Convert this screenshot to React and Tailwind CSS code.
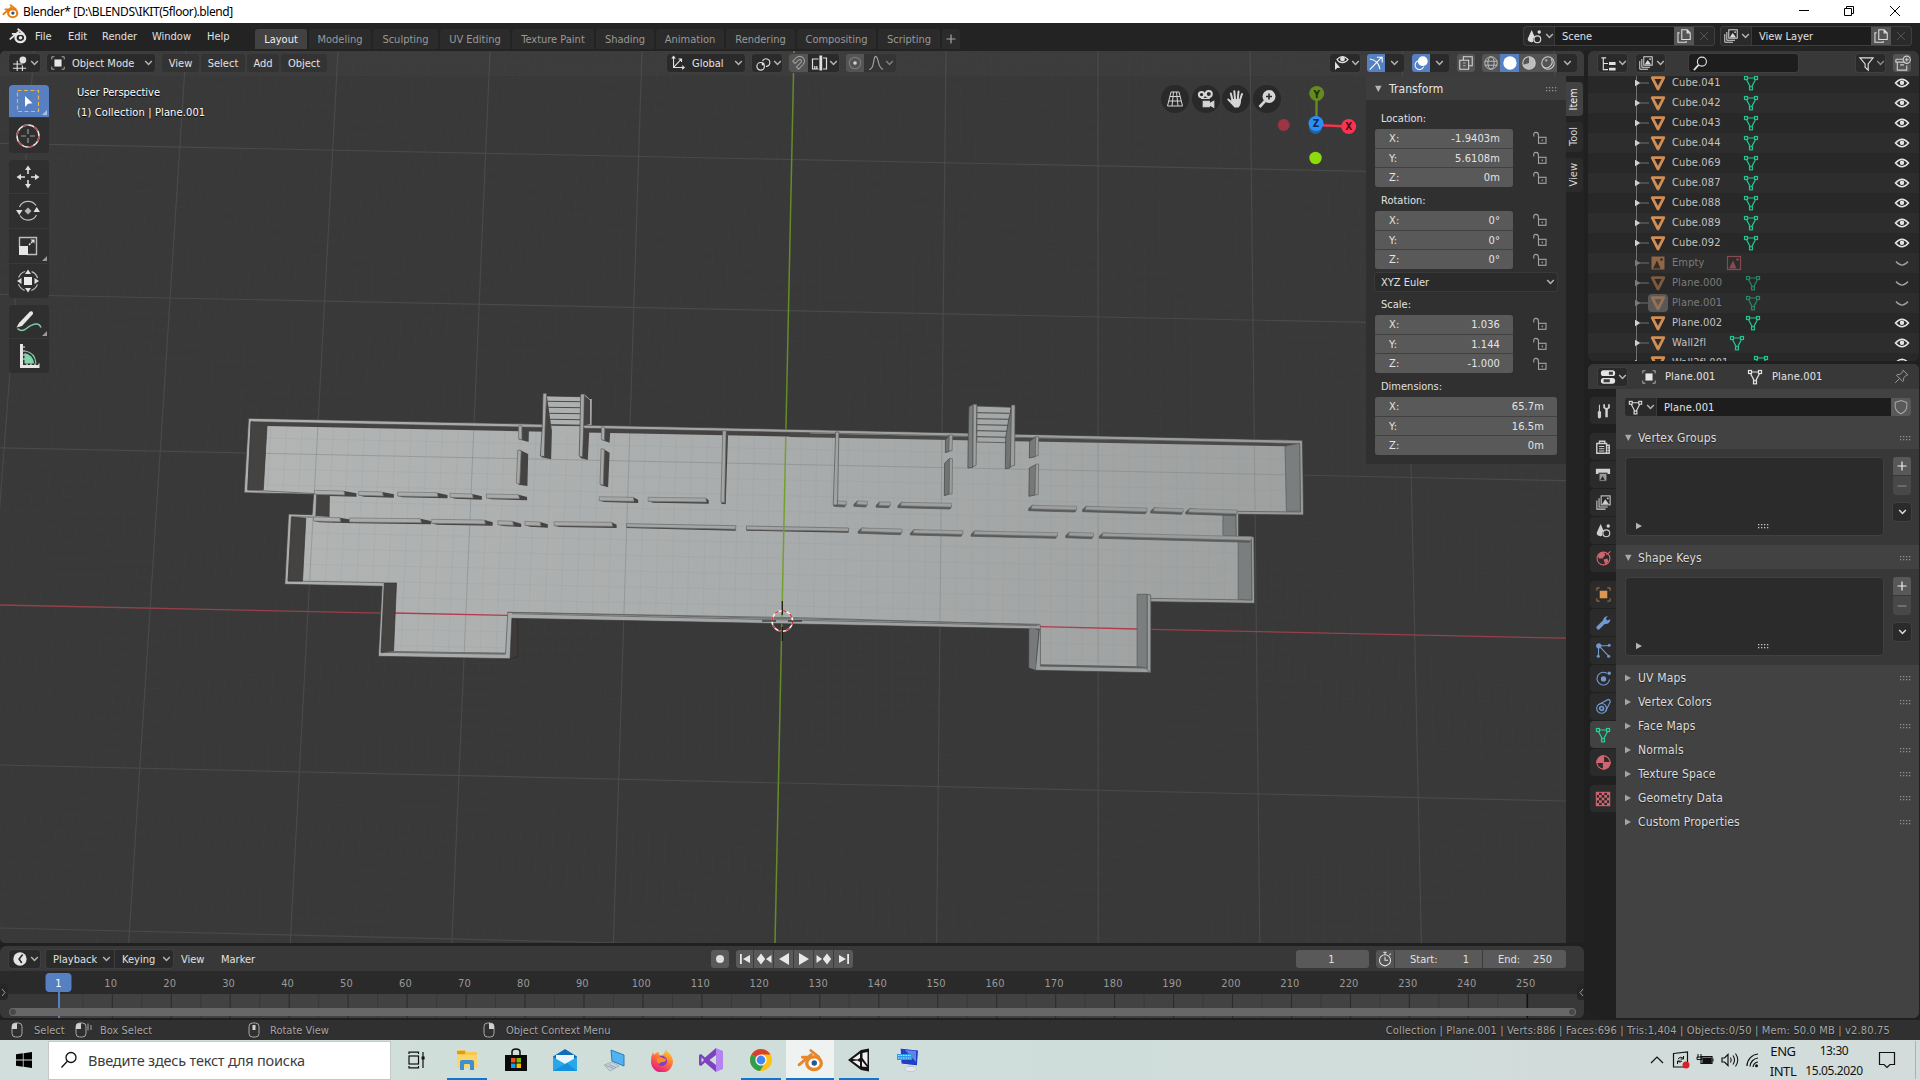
import React from "react";

/* ---------- shared bits ---------- */
const Ic = ({ s = 18, c = "#e0e0e0", children, className = "", w = 1.2, vb = "0 0 18 18" }) => (
  <svg width={s} height={s} viewBox={vb} fill="none" stroke={c} strokeWidth={w} className={"shrink-0 " + className}>
    {children}
  </svg>
);
const Chev = ({ c = "#b5b5b5", className = "" }) => (
  <svg width="9" height="6" viewBox="0 0 9 6" fill="none" stroke={c} strokeWidth="1.5" className={"shrink-0 " + className}>
    <path d="M1.2 1l3.3 3.4L7.8 1" />
  </svg>
);
const Gap = ({ className }) => <div className={"shrink-0 " + className} />;
const box = "h-[18px] shrink-0 flex items-center rounded-[3px] ";
const dark = "bg-[#2a2a2a] shadow-[0_0_0_1px_#3f3f3f] ";

/* ---------- icons ---------- */
const BlenderMark = ({ s = 18, c = "#e6e6e6", dot, hole = "none" }) => (
  <svg width={s} height={s} viewBox="0 0 20 20" fill="none" className="shrink-0">
    <path d="M10.2 2.6l6 4.8M1.5 13.2l9-7.6M4 7.6h9" stroke={c} strokeWidth="2.1" strokeLinecap="round" />
    <ellipse cx="12.6" cy="12" rx="5.4" ry="4.7" stroke={c} strokeWidth="2.5" fill={hole} />
    <circle cx="12.8" cy="11.9" r="2" fill={dot || c} />
  </svg>
);
const MeshIc = ({ s = 18, c = "#21c592", className = "", o = 1 }) => (
  <svg width={s} height={s} viewBox="0 0 18 18" fill="none" stroke={c} strokeWidth="1.2" opacity={o} className={"shrink-0 " + className}>
    <rect x="2.5" y="2.5" width="3" height="3" />
    <rect x="12.5" y="2.5" width="3" height="3" />
    <rect x="7.5" y="12.8" width="3" height="3" />
    <path d="M5.5 4h7M4.600 5.800l3.600 6.800M13.400 5.800l-3.600 6.800" />
  </svg>
);
const MeshObj = ({ o = 1 }) => (
  <svg width="16" height="16" viewBox="0 0 16 16" opacity={o} className="shrink-0 relative">
    <path d="M2.200 2.700h11.600L8 14z" fill="none" stroke="#d28d55" strokeWidth="2.800" strokeLinejoin="round" />
  </svg>
);
const ObjSq = ({ c = "#e6e6e6", s = 16 }) => (
  <Ic s={s} c={c} w={1}>
    <rect x="5" y="5" width="8" height="8" fill={c} stroke="none" />
    <path d="M2 5V2h3M13 2h3v3M16 13v3h-3M5 16H2v-3" opacity="0.75" />
  </Ic>
);
const Images = ({ c = "#dcdcdc", s = 18 }) => (
  <Ic s={s} c={c} w={1.1}>
    <rect x="6.5" y="2" width="9.5" height="9.5" />
    <path d="M4.3 4.5v9.3h9.2M2 6.8v9.2h9.2" />
    <path d="M7.5 10.800l3.400-5.300 3.800 5.300z" fill={c} stroke="none" />
    <circle cx="13.6" cy="4.6" r="1" fill={c} stroke="none" />
  </Ic>
);
const SceneIc = ({ c = "#dcdcdc", s = 18 }) => (
  <Ic s={s} c={c}>
    <path d="M6 2L1.800 11.500q0 3.500 4 3.500 1.600 0 2-1A5 5 0 0 1 9 9z" fill={c} stroke="none" />
    <circle cx="12" cy="12" r="3.6" />
    <circle cx="14" cy="4.2" r="1.8" fill={c} stroke="none" />
  </Ic>
);
const Copy = () => (
  <Ic s={16} c="#dedede">
    <path d="M6.5 2h6l3.500 3.500V13H6.500zM12.500 2v3.500H16M4 5.500H2.200V16h9.300v-1.500" />
  </Ic>
);
const Eye = () => (
  <svg width="16" height="12" viewBox="0 0 16 12" fill="none">
    <path d="M1.500 6Q8-1.600 14.500 6 8 13.600 1.500 6z" stroke="#e4e4e4" strokeWidth="1.600" />
    <circle cx="8" cy="5.800" r="2.200" fill="#e4e4e4" />
  </svg>
);
const EyeShut = () => (
  <svg width="16" height="12" viewBox="0 0 16 12" fill="none">
    <path d="M2 4.500Q8 11.600 14 4.500" stroke="#a0a0a0" strokeWidth="1.300" />
  </svg>
);
const Lock = () => (
  <svg width="16" height="14" viewBox="0 0 16 14" fill="none" stroke="#a5a5a5" strokeWidth="1.100" className="-ml-px">
    <rect x="6.500" y="6.300" width="7.500" height="6" />
    <path d="M1.800 5.500V3.600q0-2.200 2.200-2.200t2.400 2.200v2.700M10.300 8.400v1.800" />
  </svg>
);
const Grip = ({ c = "#8f8f8f" }) => (
  <svg width="12" height="5" viewBox="0 0 12 5" fill={c} className="shrink-0">
    {[0, 3, 6, 9].map((x) => (
      <g key={x}>
        <rect x={x} y="0" width="1.300" height="1.300" />
        <rect x={x} y="3" width="1.300" height="1.300" />
      </g>
    ))}
  </svg>
);
const TriR = ({ c = "#a5a5a5" }) => (
  <svg width="7" height="8" viewBox="0 0 7 8" className="shrink-0"><path d="M0 .8l6 3.200-6 3.200z" fill={c} /></svg>
);
const TriD = ({ c = "#b5b5b5" }) => (
  <svg width="7" height="8" viewBox="0 0 7 8" className="shrink-0"><path d="M0 .8h6.600L3.300 7z" fill={c} /></svg>
);

/* ---------- title + top bar ---------- */
function TitleBar() {
  return (
    <div className="h-[23px] bg-white flex items-center text-black font-['Noto_Sans'] text-[12px] tracking-[-0.42px]">
      <Gap className="w-[2px]" />
      <BlenderMark s={17} c="#e87d0d" dot="#265787" />
      <span className="ml-[4px] whitespace-pre">{"Blender* [D:\\BLENDS\\IKIT(5floor).blend]"}</span>
      <div className="ml-auto flex items-center">
        <svg width="140" height="22" viewBox="0 0 140 22" fill="none" stroke="#000" strokeWidth="1">
          <path d="M19 9.500h10" />
          <path d="M64.500 7.500h7v7h-7zM66.500 7.500v-2h7v7h-2" />
          <path d="M110 5l10 10M120 5l-10 10" />
        </svg>
      </div>
    </div>
  );
}

function IdBlock({ icon, text }) {
  return (
    <div className={box + dark + "overflow-hidden"}>
      <div className="w-[30px] flex items-center gap-[2px] pl-[2px]">{icon}<Chev /></div>
      <div className="w-[120px] h-full bg-[#1d1d1d] border-l border-[#3a3a3a] flex items-center pl-[7px] text-[#e0e0e0]">{text}</div>
      <div className="w-[20px] h-full bg-[#545454] flex items-center justify-center"><Copy /></div>
      <div className="w-[20px] h-full flex items-center justify-center"><Ic s={12} c="#5f5f5f"><path d="M3 3l12 12M15 3L3 15" /></Ic></div>
    </div>
  );
}

const TABS = [
  ["Layout", "w-[52px] mr-[2px]"], ["Modeling", "w-[62px] mr-[2px]"], ["Sculpting", "w-[65px] mr-[2px]"],
  ["UV Editing", "w-[70px] mr-[2px]"], ["Texture Paint", "w-[82px] mr-[2px]"], ["Shading", "w-[58px] mr-[2px]"],
  ["Animation", "w-[68px] mr-[2px]"], ["Rendering", "w-[69px] mr-[2px]"], ["Compositing", "w-[79px] mr-[2px]"], ["Scripting", "w-[62px] mr-[2px]"],
];
function TopBar() {
  return (
    <div className="h-[28px] bg-[#232323] flex items-start">
      <div className="w-[255px] h-[26px] flex items-center text-[#e0e0e0] shrink-0">
        <Gap className="w-[9px]" />
        <BlenderMark s={18} />
        <span className="ml-[8px] w-[33px]">File</span>
        <span className="w-[34px]">Edit</span>
        <span className="w-[50px]">Render</span>
        <span className="w-[55px]">Window</span>
        <span>Help</span>
      </div>
      <div className="flex pt-[6px]">
        {TABS.map(([t, w], i) => (
          <div key={t} className={w + " h-[20px] flex items-center justify-center rounded-t-[3px] shrink-0 " + (i === 0 ? "bg-[#424242] text-[#eeeeee]" : "bg-[#2b2b2b] text-[#999999]")}>
            {t}
          </div>
        ))}
        <div className="w-[18px] h-[20px] bg-[#2b2b2b] rounded-t-[3px] flex items-center justify-center">
          <Ic s={10} c="#a5a5a5" vb="0 0 10 10"><path d="M5 .5v9M.5 5h9" /></Ic>
        </div>
      </div>
      <div className="ml-auto flex pt-[4px] pr-[9px] gap-[7px]">
        <IdBlock icon={<SceneIc s={17} />} text="Scene" />
        <IdBlock icon={<Images s={16} />} text="View Layer" />
      </div>
    </div>
  );
}

/* ---------- 3D scene ---------- */
const f = (n) => n.toFixed(1);
const L = (...p) => p.map(([x, y]) => f(230 + x / 2.703) + "," + f(380 + y / 3)).join(" ");
const R = (...p) => p.map(([x, y]) => f(780 + x / 2.8) + "," + f(380 + y / 3)).join(" ");
const DK = "#454341";
const Poly = ({ p, c = "url(#top)", s = "none" }) => <polygon points={p} fill={c} stroke={s} strokeWidth="0.7" />;

const OUTER =
  L([50, 115], [1568, 149]) + " " +
  R([1463, 181], [1466, 405], [1284, 403], [1284, 469], [1327, 470], [1329, 670], [1039, 665], [1038, 878], [715, 871], [726, 747]) + " " +
  L([1568, 733], [762, 715], [757, 836], [401, 829], [411, 619], [148, 613], [158, 402], [222, 404], [226, 343], [38, 338]);
const FLOOR =
  L([57, 125], [1568, 158]) + " " +
  R([1455, 191], [1457, 396], [1276, 394], [1277, 469], [1320, 480], [1321, 660], [1028, 655], [1028, 864], [729, 858], [729, 735]) + " " +
  L([1568, 714], [751, 697], [745, 820], [408, 816], [417, 608], [157, 603], [166, 410], [232, 412], [234, 341], [48, 330]);

const LSEG = [
  [228, 308, 342, 331], [348, 412, 443, 334], [453, 560, 588, 336], [595, 655, 681, 340], [693, 780, 803, 342],
  [998, 1090, 1103, 350], [1130, 1286, 1294, 352], [226, 297, 333, 411], [323, 515, 543, 414], [545, 688, 710, 418],
  [724, 764, 787, 422], [797, 838, 859, 424], [876, 1032, 1045, 425],
];
const RSEG = [
  [151, 186, 363, 364], [207, 245, 363, 364], [269, 309, 366, 366], [330, 481, 367, 370], [696, 831, 376, 379],
  [847, 1028, 379, 384], [1038, 1129, 383, 386], [1136, 1280, 386, 390], [219, 342, 444, 447], [365, 512, 449, 452],
  [535, 777, 453, 458], [800, 878, 457, 459], [894, 1320, 459, 470],
];

function gridLines(minor) {
  const out = [];
  for (let i = -60; i <= 60; i++) {
    if ((i % 10 === 0) === minor) continue;
    const k = i / 10;
    if (k === 0) continue;
    out.push("M" + f(794 + 152 * k) + " 51L" + f(775 + 161.6 * k) + " 943");
  }
  const ys = [-7, 143.3, 294.5, 447.8, 605, 765, 928, 1094];
  const yr = [24, 175.5, 326.5, 480.7, 638.2, 801, 966, 1134];
  for (let a = 0; a < 7; a++)
    for (let m = 0; m < 10; m++) {
      if ((m === 0) === minor || (a === 4 && m === 0)) continue;
      const l = ys[a] + ((ys[a + 1] - ys[a]) * m) / 10;
      const r = yr[a] + ((yr[a + 1] - yr[a]) * m) / 10;
      out.push("M0 " + f(l) + "L1566 " + f(r));
    }
  return out.join("");
}
const MINOR = gridLines(true);
const MAJOR = gridLines(false);

function Scene() {
  return (
    <svg className="absolute left-0 top-0" width="1566" height="892" viewBox="0 51 1566 892">
      <defs>
        <linearGradient id="floor" gradientUnits="userSpaceOnUse" x1="250" y1="430" x2="1300" y2="600">
          <stop offset="0" stopColor="#b3b5b5" />
          <stop offset="0.5" stopColor="#a9acac" />
          <stop offset="1" stopColor="#9ea0a0" />
        </linearGradient>
        <linearGradient id="top" gradientUnits="userSpaceOnUse" x1="250" y1="0" x2="1300" y2="0">
          <stop offset="0" stopColor="#adafae" />
          <stop offset="1" stopColor="#979a9a" />
        </linearGradient>
        <clipPath id="fl"><polygon points={FLOOR} /></clipPath>
      </defs>
      <rect x="0" y="51" width="1566" height="892" fill="#393939" />
      <path d={MINOR} stroke="#3c3c3c" strokeWidth="1" fill="none" />
      <path d={MAJOR} stroke="#494949" strokeWidth="1.200" fill="none" />
      <path d="M0 605L1566 638.200" stroke="#97404a" strokeWidth="1.300" />
      <path d="M794 51L775 943" stroke="#648b27" strokeWidth="1.500" />

      <Poly p={L([762, 715], [778, 717], [778, 830], [757, 836])} c="#3d3a39" s="#2c2b2a" />
      <Poly p={R([697, 742], [726, 747], [718, 871], [697, 863])} c="#777a7a" s="#444" />
      <Poly p={L([846, 40], [856, 40], [856, 48], [946, 50], [948, 42], [958, 42], [973, 57], [978, 57], [977, 140], [845, 140])} c="url(#floor)" s="#333" />
      <Poly p={OUTER} s="#3c3c3c" />
      <Poly p={R([700, 742], [716, 746], [716, 869], [698, 863])} c="#777a7a" />
      <Poly p={FLOOR} c="url(#floor)" s="#555" />
      <g clipPath="url(#fl)" fill="none">
        <path d={MINOR} stroke="#8d9090" strokeWidth="0.800" opacity="0.200" />
        <path d={MAJOR} stroke="#838686" strokeWidth="1" opacity="0.550" />
        <path d={"M" + L([442, 699]) + "L" + L([750, 706])} stroke="#b03c4c" strokeWidth="1.300" />
        <path d={"M" + R([729, 740]) + "L" + R([1000, 747])} stroke="#b03c4c" strokeWidth="1.300" />
      </g>
      {/* inner faces of the outer walls */}
      <Poly p={L([57, 125], [1568, 158], [1568, 171], [100, 138])} c={DK} />
      <Poly p={R([27, 159], [1455, 191], [1414, 199], [27, 171])} c="#4b4947" />
      <Poly p={L([57, 125], [100, 138], [90, 329], [48, 329])} c={DK} s="#333" />
      <Poly p={L([234, 342], [270, 347], [269, 411], [232, 408])} c={DK} />
      <Poly p={L([167, 411], [205, 415], [196, 603], [157, 603])} c={DK} s="#333" />
      <Poly p={L([418, 609], [450, 609], [442, 816], [409, 818])} c={DK} s="#333" />
      <Poly p={L([442, 813], [745, 818], [745, 824], [410, 818])} c="#6d6f6f" />
      <Poly p={R([1414, 199], [1455, 190], [1457, 394], [1418, 394])} c="#7b7e7e" s="#5a5a5a" />
      <Poly p={R([1240, 402], [1276, 402], [1277, 468], [1240, 466])} c="#7b7e7e" s="#5a5a5a" />
      <Poly p={R([1283, 484], [1320, 480], [1321, 660], [1283, 658])} c="#7b7e7e" s="#5a5a5a" />
      <Poly p={R([1028, 643], [1038, 645], [1038, 878], [1028, 870])} s="#555" />
      <Poly p={R([1000, 643], [1028, 643], [1028, 864], [1000, 859])} c="#7b7e7e" s="#5a5a5a" />
      <Poly p={R([729, 853], [1000, 859], [1028, 865], [729, 859])} c="#5d5f5f" />
      <path d={"M" + L([751, 697]) + "L" + R([726, 733]) + "M" + L([762, 701]) + "L" + R([720, 737])} stroke="#606262" strokeWidth="0.800" />

      {/* corridor partitions */}
      {LSEG.map(([a, b, t, y], i) => (
        <g key={i}>
          <Poly p={L([a, y + 8], [b, y + 2], [t, y + 9], [t, y + 19], [a + 14, y + 16], [a, y + 12])} c={DK} />
          <Poly p={L([a, y], [b, y + 2], [b + 2, y + 14], [a, y + 12])} s="#777" />
        </g>
      ))}
      {RSEG.map(([a, b, y, z], i) => (
        <g key={i}>
          <Poly p={R([a, y + 10], [a + 10, y], [b, z + 8], [b - 5, z + 17], [a, y + 16])} c="#5a5b5a" s="#555" />
          <Poly p={R([a + 10, y], [b, z], [b - 1, z + 11], [a + 8, y + 10])} s="#777" />
        </g>
      ))}
      <Poly p={L([1072, 439], [1367, 444], [1367, 452], [1072, 444])} c={DK} />
      <Poly p={L([1072, 431], [1367, 437], [1367, 448], [1072, 441])} s="#666" />
      <Poly p={L([1396, 446], [1672, 451], [1672, 458], [1396, 452])} c={DK} />
      <Poly p={L([1396, 438], [1672, 444], [1672, 454], [1396, 449])} s="#666" />

      {/* cross walls, left half */}
      <Poly p={L([788, 145], [808, 152], [807, 186], [780, 178])} c={DK} />
      <Poly p={L([780, 137], [789, 137], [789, 180], [780, 176])} s="#666" />
      <Poly p={L([784, 210], [806, 222], [804, 318], [780, 314])} c={DK} />
      <Poly p={L([778, 210], [787, 212], [783, 312], [774, 309])} s="#666" />
      <Poly p={L([1012, 145], [1028, 155], [1026, 188], [1005, 180])} c={DK} />
      <Poly p={L([1004, 140], [1013, 142], [1012, 182], [1004, 178])} s="#666" />
      <Poly p={L([1008, 206], [1026, 218], [1022, 322], [1002, 316])} c={DK} />
      <Poly p={L([1003, 206], [1012, 208], [1009, 316], [1000, 313])} s="#666" />
      <Poly p={L([1338, 152], [1346, 168], [1340, 373], [1328, 371])} c={DK} />
      <Poly p={L([1332, 152], [1341, 152], [1337, 368], [1327, 366])} s="#666" />
      {/* cross walls, right half */}
      <Poly p={R([156, 156], [165, 156], [161, 374], [149, 376])} s="#555" />
      <Poly p={R([463, 180], [474, 165], [474, 214], [463, 218])} c="#727474" s="#444" />
      <Poly p={R([474, 165], [483, 165], [482, 212], [473, 212])} s="#666" />
      <Poly p={R([461, 250], [475, 235], [474, 342], [460, 347])} c="#727474" s="#444" />
      <Poly p={R([475, 235], [483, 236], [482, 342], [474, 342])} s="#666" />
      <Poly p={R([699, 184], [716, 170], [715, 230], [698, 234])} c="#777979" s="#444" />
      <Poly p={R([716, 170], [724, 170], [723, 227], [715, 227])} s="#666" />
      <Poly p={R([698, 264], [716, 254], [714, 345], [697, 349])} c="#777979" s="#444" />
      <Poly p={R([716, 253], [724, 252], [723, 344], [714, 345])} s="#666" />

      {/* left stairs */}
      <Poly p={L([857, 138], [946, 138], [946, 165], [868, 160])} c="url(#floor)" />
      {[64, 82, 100, 118, 136].map((y, i) => (
        <path key={y} d={"M" + L([858 + i * 2.5, y]) + "L" + L([946, y + 1])} stroke="#3e3e3e" strokeWidth="0.900" />
      ))}
      <Poly p={L([856, 45], [868, 136], [870, 152], [868, 238], [842, 232], [852, 140])} c={DK} />
      <Poly p={L([846, 40], [856, 40], [852, 142], [850, 230], [839, 228], [844, 140])} s="#444" />
      <Poly p={L([956, 45], [973, 60], [973, 132], [955, 137])} c={DK} />
      <Poly p={L([955, 142], [971, 155], [967, 240], [947, 234])} c={DK} />
      <Poly p={L([948, 42], [958, 42], [956, 140], [953, 232], [944, 228], [946, 140])} s="#444" />
      <Poly p={L([973, 57], [978, 57], [977, 135], [973, 135])} />
      {/* right stairs */}
      <Poly p={R([529, 80], [541, 73], [540, 262], [526, 264], [527, 172])} c="#7b7e7e" s="#444" />
      <Poly p={R([551, 78], [648, 82], [636, 188], [551, 186])} c="url(#floor)" s="#444" />
      {[98, 116, 134, 152, 170].map((y) => (
        <path key={y} d={"M" + R([551, y]) + "L" + R([642, y + 2])} stroke="#404040" strokeWidth="0.900" />
      ))}
      <Poly p={R([541, 73], [551, 73], [549, 256], [540, 260])} s="#555" />
      <Poly p={R([648, 82], [648, 175], [644, 264], [631, 266], [632, 172], [640, 120])} c="#727575" s="#444" />
      <Poly p={R([648, 75], [658, 75], [657, 256], [645, 260])} s="#555" />

      <path d="M785.800 437L781.900 618" stroke="#74a02c" strokeWidth="1.500" />
      {/* 3D cursor */}
      <circle cx="782.300" cy="621" r="10.300" fill="none" stroke="#f1f1f1" strokeWidth="1.500" />
      <circle cx="782.300" cy="621" r="10.300" fill="none" stroke="#d33a3a" strokeWidth="1.500" strokeDasharray="4.040 4.040" />
      <path d="M782.300 601v14M782.300 627v14M762 621h14M788 621h14" stroke="#111" strokeWidth="1.100" />
    </svg>
  );
}

/* ---------- viewport header ---------- */
function ViewHeader() {
  const mb = "h-[18px] shrink-0 flex items-center justify-center rounded-[3px] bg-[#333333] text-[#e2e2e2] ";
  const on = "h-[18px] w-[18px] shrink-0 flex items-center justify-center bg-[#5680c2] rounded-l-[3px]";
  return (
    <div className="relative h-[25px] flex items-center pb-[1px] pr-[7px] text-[#e2e2e2] bg-white/[0.02]">
      <Gap className="w-[9px]" />
      <div className={box + dark + "w-[31px] pl-[3px] gap-[1px]"}>
        <Ic s={17}><path d="M1 9.500h10M1 14h14M5.500 6v11M11 11v6" /><circle cx="11.500" cy="5.300" r="3.600" fill="#e0e0e0" stroke="none" /></Ic><Chev />
      </div>
      <Gap className="w-[7px]" />
      <div className={box + dark + "w-[108px] pl-[3px]"}>
        <ObjSq /><span className="ml-[6px]">Object Mode</span><Chev className="ml-auto mr-[2px]" />
      </div>
      <Gap className="w-[7px]" />
      <div className={mb + "w-[37px] mr-[2px]"}>View</div>
      <div className={mb + "w-[44px] mr-[2px]"}>Select</div>
      <div className={mb + "w-[32px] mr-[2px]"}>Add</div>
      <div className={mb + "w-[46px]"}>Object</div>
      <Gap className="w-[340px]" />
      <div className={box + dark + "w-[78px] pl-[3px]"}>
        <Ic s={16}><path d="M4 1.500V14h12M2 4l2-2.500L6 4M13.500 12l2.500 2-2.500 2M4 14L12.500 5M9.500 4.500h3.500V8" /></Ic>
        <span className="ml-[6px]">Global</span><Chev className="ml-auto mr-[2px]" />
      </div>
      <Gap className="w-[7px]" />
      <div className={box + dark + "w-[30px] pl-[3px] gap-[1px]"}>
        <Ic s={17}><circle cx="6" cy="12" r="4" /><path d="M8 6.500a4 4 0 1 1 3.500 5.500" /><circle cx="8.500" cy="9.500" r="1.500" fill="#e0e0e0" stroke="none" /></Ic><Chev />
      </div>
      <Gap className="w-[7px]" />
      <div className={box + dark + "w-[50px] overflow-hidden"}>
        <div className="w-[19px] h-full bg-[#545454] flex items-center justify-center">
          <Ic s={16} c="#9c9c9c"><path d="M2 7l4-4q4-3 7.500 0t0 8l-5 5-2.500-2.500 5-5q1.500-1.500.3-2.700t-2.800 0L4.500 9.500z" /></Ic>
        </div>
        <Ic s={18} className="ml-[2px]"><path d="M8.500 5H2.500v10h6M4.800 12v3M6.800 12v3M13 4h3.500v11H13" /><path d="M10.800 1.500v15" strokeWidth="2.800" /></Ic>
        <Chev className="ml-[1px]" />
      </div>
      <Gap className="w-[7px]" />
      <div className="h-[18px] w-[50px] flex items-center rounded-[3px] overflow-hidden bg-[#343434] shrink-0">
        <div className="w-[18px] h-full bg-[#545454] flex items-center justify-center">
          <Ic s={16} c="#7d7d7d"><circle cx="9" cy="9" r="6.500" /><circle cx="9" cy="9" r="2" fill="#d5d5d5" stroke="none" /></Ic>
        </div>
        <Ic s={18} c="#a0a0a0" className="ml-[3px]"><path d="M2 15.500q3.500 0 4.500-7T9 2.500t2.500 6T16 15.500" /></Ic>
        <Chev c="#808080" />
      </div>
      <div className="ml-auto flex items-center">
        <div className={box + dark + "w-[30px] pl-[2px] gap-[1px]"}>
          <Ic s={18}><path d="M5 5.500Q10.500-.5 16 5.500q-2 3-5.500 3.200T5 5.500z" /><circle cx="10.500" cy="5" r="1.800" fill="#e0e0e0" /><path d="M3 7.500v8.500l2.200-2 3-.2z" fill="#e0e0e0" stroke="none" /></Ic><Chev />
        </div>
        <Gap className="w-[7px]" />
        <div className={on}><Ic s={16} c="#fff"><path d="M2 4.500Q12 6 13.500 16M2 16.500L15 3M10 2.500h6v6" /></Ic></div>
        <div className="h-[18px] w-[19px] bg-[#2a2a2a] rounded-r-[3px] flex items-center justify-center"><Chev /></div>
        <Gap className="w-[8px]" />
        <div className={on}><Ic s={16} c="#fff"><circle cx="11" cy="7" r="5.500" fill="#fff" stroke="none" /><path d="M6 6.500a5 5 0 1 0 6 6.500" /></Ic></div>
        <div className="h-[18px] w-[19px] bg-[#2a2a2a] rounded-r-[3px] flex items-center justify-center"><Chev /></div>
        <Gap className="w-[8px]" />
        <div className="h-[18px] w-[18px] rounded-[3px] bg-[#545454] flex items-center justify-center"><Ic s={16} c="#d8d8d8"><path d="M2 6h10v10H2zM6 6V2h10v10h-4" /><path d="M6 9h3M6 12h3" strokeDasharray="1.500 1" /></Ic></div>
        <Gap className="w-[7px]" />
        <div className="flex rounded-[3px] overflow-hidden bg-[#545454] h-[18px] items-center">
          <div className="w-[18px] flex justify-center"><Ic s={16} c="#c5c5c5" w={1}><circle cx="9" cy="9" r="7" /><ellipse cx="9" cy="9" rx="3.500" ry="7" /><path d="M2 7h14M2 11.500h14" /></Ic></div>
          <div className="w-[19px] h-full bg-[#5680c2] flex justify-center items-center"><Ic s={16}><circle cx="9" cy="9" r="7.500" fill="#fff" stroke="none" /></Ic></div>
          <div className="w-[19px] flex justify-center"><Ic s={16} c="#cfcfcf"><circle cx="9" cy="9" r="7" /><path d="M9 9V2a7 7 0 0 1 6 10.500zM9 9l6 3.500A7 7 0 0 1 2.500 11z" fill="#cfcfcf" stroke="none" opacity="0.850" /></Ic></div>
          <div className="w-[19px] flex justify-center"><Ic s={16} c="#cfcfcf"><circle cx="9" cy="9" r="7" /><path d="M12.500 4.500q3 4-1 8t-8 .5" /><circle cx="7" cy="6" r="1.500" fill="#cfcfcf" stroke="none" opacity="0.600" /></Ic></div>
          <div className="w-[20px] h-full bg-[#2a2a2a] flex items-center justify-center"><Chev /></div>
        </div>
      </div>
    </div>
  );
}

function Tool({ h, active, corner, children, className = "" }) {
  return (
    <div className={"relative w-[40px] flex items-center justify-center border-b border-[#393939] " + h + " " + (active ? "bg-[#5680c2] " : "bg-[#2f2f2f] ") + className}>
      {children}
      {corner && <svg className="absolute right-[2px] bottom-[2px]" width="5" height="5" viewBox="0 0 5 5"><path d="M5 0v5H0z" fill={active ? "#a8bfe6" : "#9a9a9a"} /></svg>}
    </div>
  );
}

function Toolbar() {
  return (
    <div className="ml-[9px] mt-[9px] w-[40px] flex flex-col shrink-0">
      <Tool h="h-[33px]" active corner className="rounded-t-[4px]">
        <Ic s={26} vb="0 0 26 26" className="mr-[2px]"><rect x="2.500" y="2.500" width="21" height="21" stroke="#f2b04a" strokeDasharray="4 2.500" strokeWidth="1.200" /><path d="M10 8v11l3-3.200 4.500-.5z" fill="#fff" stroke="none" /></Ic>
      </Tool>
      <Tool h="h-[36px]" className="rounded-b-[4px]">
        <Ic s={26} vb="0 0 26 26" className="mr-[2px]"><circle cx="13" cy="13" r="11" stroke="#e8e8e8" strokeWidth="1.500" /><circle cx="13" cy="13" r="11" stroke="#b2504c" strokeWidth="1.500" strokeDasharray="5.760 5.760" /><path d="M13 6v5M13 15v5M6 13h5M15 13h5" stroke="#9a9a9a" /></Ic>
      </Tool>
      <Tool h="h-[34px]" className="mt-[6px] rounded-t-[4px]">
        <Ic s={26} vb="0 0 26 26" className="mr-[2px]"><path d="M13 1.500l3 4.500h-6zM13 24.500l3-4.500h-6zM1.500 13l4.500-3v6zM24.500 13l-4.500-3v6z" fill="#e0e0e0" stroke="none" /><path d="M13 6v4M13 16v4M6 13h4M16 13h4" strokeWidth="1.600" /></Ic>
      </Tool>
      <Tool h="h-[35px]">
        <Ic s={26} vb="0 0 26 26" className="mr-[2px]"><path d="M4.500 9a9.500 9.500 0 0 1 16.500-1.500M5 17.500a9.500 9.500 0 0 0 16.500-.5" stroke="#bdbdbd" /><path d="M1 12h6.500L4.300 17zM25 14h-6.500L21.700 9z" fill="#e0e0e0" stroke="none" /><path d="M13 9.500l3.500 3.500-3.500 3.500L9.500 13z" fill="#b5b5b5" stroke="none" /></Ic>
      </Tool>
      <Tool h="h-[35px]" corner>
        <Ic s={26} vb="0 0 26 26" className="mr-[2px]"><path d="M4.500 14V4.500h17v17H12" stroke="#bdbdbd" strokeWidth="1.400" /><rect x="4" y="13" width="9" height="9" fill="#e6e6e6" stroke="none" /><path d="M14 12l4-4" strokeDasharray="2 1" strokeWidth="1.500" /><path d="M15.500 6.500h4v4z" fill="#e6e6e6" stroke="none" /></Ic>
      </Tool>
      <Tool h="h-[35px]" className="rounded-b-[4px]">
        <Ic s={26} vb="0 0 26 26" className="mr-[2px]"><circle cx="13" cy="13" r="10" stroke="#bdbdbd" strokeDasharray="8.900 6.800" strokeDashoffset="-3.400" /><rect x="9" y="9" width="8" height="8" fill="#ececec" stroke="none" /><path d="M13 1.500l3 4.500h-6zM13 24.500l3-4.500h-6zM2 13l4.500-3v6zM24 13l-4.500-3v6z" fill="#e0e0e0" stroke="none" /></Ic>
      </Tool>
      <Tool h="h-[34px]" corner className="mt-[6px] rounded-t-[4px]">
        <Ic s={26} vb="0 0 26 26"><path d="M.5 18.500L3 14 14 2.500q2-1 3 1v1.500L6 17z" fill="#e6e6e6" stroke="none" /><path d="M1.500 19.500q4 4 9 0t9-4.500 5.500 3.500" stroke="#7fc7a4" strokeWidth="1.600" /></Ic>
      </Tool>
      <Tool h="h-[35px]" className="rounded-b-[4px]">
        <Ic s={26} vb="0 0 26 26"><path d="M8.500 20.500V10a11 11 0 0 1 9.500 10.500z" fill="#7fd4aa" stroke="none" /><path d="M5.500 1v22.500h18" stroke="#e6e6e6" strokeWidth="3" /><path d="M7 4h2M7 8h2M7 12h2M7 16h2M11 22v-1.500M15 22v-1.500M19 22v-1.500M23 22v-1.500" stroke="#e6e6e6" /><path d="M9 8q10 1.500 11 12.500" stroke="#7fd4aa" /></Ic>
      </Tool>
    </div>
  );
}

function Fields({ rows, wide, locks }) {
  return (
    <div className="flex">
      <div className={(wide ? "w-[182px]" : "w-[138px]") + " h-[58px] flex flex-col gap-px rounded-[3px] overflow-hidden bg-[#404040]"}>
        {rows.map(([a, b]) => (
          <div key={a} className="flex-1 bg-[#595959] flex items-center justify-between pl-[14px] leading-none text-[#e4e4e4] pr-[13px] tracking-[0.1px]">
            <span>{a}</span><span>{b}</span>
          </div>
        ))}
      </div>
      {locks && <div className="ml-[20px] flex flex-col justify-between h-[58px] py-[2px]"><Lock /><Lock /><Lock /></div>}
    </div>
  );
}

function NPanel() {
  const lab = "h-[18px] mb-[2px] flex items-center text-[#e0e0e0] pl-[6px]";
  return (
    <div className="w-[200px] h-[388px] bg-[#303030] shrink-0">
      <div className="h-[24px] bg-[#3d3d3d] flex items-center pt-[2px] pl-[9px] pr-[8px] text-[12px]">
        <TriD /><span className="ml-[7px] text-[#e6e6e6] tracking-[0.1px]">Transform</span><div className="ml-auto"><Grip /></div>
      </div>
      <div className="pl-[9px] pt-[9px]">
        <div className={lab}>Location:</div>
        <Fields locks rows={[["X:", "-1.9403m"], ["Y:", "5.6108m"], ["Z:", "0m"]]} />
        <div className={lab + " mt-[4px]"}>Rotation:</div>
        <Fields locks rows={[["X:", "0°"], ["Y:", "0°"], ["Z:", "0°"]]} />
        <div className="mt-[4px] w-[182px] h-[18px] rounded-[3px] bg-[#2a2a2a] shadow-[0_0_0_1px_#3a3a3a] flex items-center pl-[6px] pr-[2px] text-[#e0e0e0]">XYZ Euler<Chev className="ml-auto" /></div>
        <div className={lab + " mt-[4px]"}>Scale:</div>
        <Fields locks rows={[["X:", "1.036"], ["Y:", "1.144"], ["Z:", "-1.000"]]} />
        <div className={lab + " mt-[4px]"}>Dimensions:</div>
        <Fields wide rows={[["X:", "65.7m"], ["Y:", "16.5m"], ["Z:", "0m"]]} />
      </div>
    </div>
  );
}

const NavBtn = ({ children }) => (
  <div className="w-[28px] h-[28px] shrink-0 rounded-full bg-[#292929] flex items-center justify-center">{children}</div>
);

function Gizmo() {
  return (
    <svg width="90" height="90" viewBox="1275 80 90 90" className="shrink-0 font-['DejaVu_Sans'] text-[10px] font-bold" textAnchor="middle">
      <path d="M1316.500 98v27" stroke="#648b27" strokeWidth="2.400" />
      <path d="M1316 125l32 1.500" stroke="#f0364f" strokeWidth="2.400" />
      <circle cx="1283.700" cy="125" r="6" fill="#9b3545" />
      <circle cx="1315.500" cy="127.500" r="6.500" fill="#2562a3" />
      <circle cx="1316.700" cy="93.500" r="7.500" fill="#648b1f" />
      <circle cx="1316" cy="123.500" r="7.500" fill="#2c8ff8" />
      <circle cx="1348.700" cy="126.500" r="7.500" fill="#fb3350" />
      <circle cx="1315.500" cy="158" r="6.200" fill="#8ddb0a" />
      <text x="1316.700" y="97.500" fill="#1f2d08">Y</text>
      <text x="1316" y="127.300" fill="#0d2b4c">Z</text>
      <text x="1348.700" y="130.300" fill="#4d0f18">X</text>
    </svg>
  );
}

const VTab = ({ t, h, active }) => (
  <div className={"w-[17px] flex items-center justify-center pr-[2px] rounded-r-[4px] " + h + " " + (active ? "bg-[#424242] text-[#f0f0f0]" : "bg-[#2b2b2b] text-[#d5d5d5]")}>
    <span className="[writing-mode:vertical-rl] rotate-180 leading-none">{t}</span>
  </div>
);

function Viewport() {
  return (
    <div className="relative w-[1584px] h-[892px] rounded-[5px] overflow-hidden bg-[#393939] flex flex-col">
      <div className="absolute right-0 top-[25px] bottom-0 w-[19px] bg-[#232323]" />
      <Scene />
      <ViewHeader />
      <div className="relative flex flex-1">
        <Toolbar />
        <div className="ml-[28px] mt-[7px] text-white leading-[20px] w-[1084px] shrink-0 [text-shadow:0_1px_1px_#000]">
          <div>User Perspective</div>
          <div className="tracking-[0.13px]">(1) Collection | Plane.001</div>
        </div>
        <div className="flex gap-[2.6px] mt-[9px] shrink-0 w-[114px]">
          <NavBtn><Ic s={18} c="#d5d5d5" w={1}><path d="M5 2h8l3.500 14h-15zM4 6.500h10M2.800 11h12.400M7.500 2L6 16M10.500 2L12 16" /></Ic></NavBtn>
          <NavBtn><Ic s={20} c="#d5d5d5"><circle cx="5" cy="5" r="2.400" strokeWidth="1.800" /><circle cx="11.500" cy="4.500" r="2.700" strokeWidth="1.800" /><path d="M4.500 8.500h8M6.500 11h5.500v5H6.500zM12.500 13l3.500-2v5.500l-3.500-2z" fill="#d5d5d5" strokeWidth="1" /></Ic></NavBtn>
          <NavBtn><Ic s={20} c="#d5d5d5" vb="0 0 20 20"><path d="M6.500 11L4.800 4.500M9 10L8.300 2.200M11.800 10l.7-7.500M14 11l2-6M6 14L2.300 10.500" strokeWidth="2" strokeLinecap="round" /><path d="M5.500 10h9.500q.5 5-2.500 8.500H8.500L4.500 14z" fill="#d5d5d5" stroke="none" /></Ic></NavBtn>
          <NavBtn><Ic s={20} c="#d5d5d5" vb="0 0 20 20"><circle cx="12" cy="7.500" r="6.500" fill="#d5d5d5" stroke="none" /><path d="M8 12l-5.500 6" strokeWidth="2.600" /><path d="M12 4.500v6M9 7.500h6" stroke="#292929" strokeWidth="1.600" /></Ic></NavBtn>
        </div>
        <div className="mt-[4px]"><Gizmo /></div>
        <div className="absolute right-0 top-0 flex">
          <NPanel />
          <div className="w-[18px] flex flex-col gap-[6px] pt-[6px]">
            <VTab t="Item" h="h-[34px]" active />
            <VTab t="Tool" h="h-[30px]" />
            <VTab t="View" h="h-[34px]" />
          </div>
        </div>
      </div>
    </div>
  );
}

/* ---------- timeline ---------- */
const PBtn = ({ children, w = "w-[19px]" }) => <div className={w + " h-full bg-[#595959] flex items-center justify-center"}>{children}</div>;
const P = ({ d, w = 14 }) => <svg width={w} height="12" viewBox={"0 0 " + w + " 12"} fill="#e8e8e8"><path d={d} /></svg>;

function Timeline() {
  const nums = Array.from({ length: 25 }, (_, i) => (i + 1) * 10);
  return (
    <div className="relative w-[1584px] h-[72px] rounded-[6px] overflow-hidden bg-[#383838] flex flex-col">
      <div className="h-[25px] flex items-center pt-px text-[#e0e0e0] pr-[18px] shrink-0">
        <Gap className="w-[9px]" />
        <div className={box + dark + "w-[31px] pl-[3px] gap-[2px]"}>
          <Ic s={16}><circle cx="9" cy="9" r="7.500" fill="#e4e4e4" stroke="none" /><path d="M12 4L8 9l3 4.500" stroke="#2a2a2a" strokeWidth="1.800" /></Ic><Chev />
        </div>
        <Gap className="w-[6px]" />
        <div className={box + dark + "w-[127px]"}>
          <div className="w-[69px] h-full flex items-center pl-[7px] border-r border-[#3f3f3f]">Playback<Chev className="ml-auto mr-[3px]" /></div>
          <div className="flex-1 flex items-center pl-[7px]">Keying<Chev className="ml-auto mr-[2px]" /></div>
        </div>
        <span className="ml-[8px] w-[40px]">View</span>
        <span className="w-[490px]">Marker</span>
        <div className="w-[18px] h-[18px] bg-[#595959] rounded-[3px] flex items-center justify-center"><Ic s={10} vb="0 0 10 10"><circle cx="5" cy="5" r="4" fill="#e0e0e0" stroke="none" /></Ic></div>
        <Gap className="w-[7px]" />
        <div className="flex gap-px h-[18px] rounded-[3px] overflow-hidden bg-[#3c3c3c]">
          <PBtn w="w-[17px]"><P w={12} d="M1 1h1.800v10H1zM11 2v8L4 6z" /></PBtn>
          <PBtn><P w={16} d="M5 0.500l4.200 5.500L5 11.500.8 6zM15.500 2v8L10 6z" /></PBtn>
          <PBtn><P w={12} d="M11 0v12L1 6z" /></PBtn>
          <PBtn><P w={12} d="M1 0v12l10-6z" /></PBtn>
          <PBtn><P w={16} d="M11 0.500l4.200 5.500L11 11.500 6.800 6zM.5 2v8L6 6z" /></PBtn>
          <PBtn><P w={12} d="M9.200 1H11v10H9.200zM1 2v8l7-4z" /></PBtn>
        </div>
        <div className="ml-auto flex h-[18px]">
          <div className="w-[73px] bg-[#595959] rounded-[3px] flex items-center justify-center pr-[2px]">1</div>
          <Gap className="w-[7px]" />
          <div className="flex gap-px rounded-[3px] overflow-hidden bg-[#3c3c3c]">
            <div className="w-[18px] bg-[#545454] flex items-center justify-center"><Ic s={16}><circle cx="9" cy="10.500" r="6.200" /><path d="M9 6.500v4h3.500M7 1.500h4M9 1.500v3M14 4.500l1.500-1.500" /></Ic></div>
            <div className="w-[87px] bg-[#595959] flex items-center justify-between pl-[15px] pr-[13px]"><span>Start:</span><span>1</span></div>
            <div className="w-[83px] bg-[#595959] flex items-center justify-between pl-[15px] pr-[14px]"><span>End:</span><span>250</span></div>
          </div>
        </div>
      </div>
      <svg width="1584" height="47" viewBox="0 0 1584 47" className="font-['DejaVu_Sans'] text-[11px] [font-stretch:condensed]">
        <rect width="1584" height="23" fill="#2a2a2a" />
        <rect y="23" width="1584" height="24" fill="#383838" />
        <rect x="59" y="23" width="1468" height="24" fill="#424242" />
        {nums.map((n, i) => (
          <g key={n}>
            <path d={"M" + f(112.3 + 58.96 * i) + " 23v24"} stroke={n === 250 ? "#111" : "#2c2c2c"} strokeWidth={n === 250 ? 1.6 : 1.1} />
            <path d={"M" + f(82.8 + 58.96 * i) + " 23v24"} stroke="#393939" />
            <text x={110.7 + 58.96 * i} y="15.500" textAnchor="middle" fill="#999999" letterSpacing="0.150">{n}</text>
          </g>
        ))}
        <rect x="9" y="37" width="1567" height="8" rx="4" fill="#676767" />
        <circle cx="13" cy="41" r="3.500" fill="#484848" stroke="#7a7a7a" strokeWidth="0.600" />
        <circle cx="1572" cy="41" r="3.500" fill="#484848" stroke="#7a7a7a" strokeWidth="0.600" />
        <path d="M59 20v17M59 45v2" stroke="#5680c2" strokeWidth="2" />
        <rect x="45.500" y="2" width="26" height="19" rx="4" fill="#5680c2" />
        <text x="58.500" y="15.500" textAnchor="middle" fill="#fff">1</text>
        <rect x="-4" y="13" width="12" height="16" rx="4" fill="#262626" />
        <path d="M2 18l3 3.500-3 3.500" stroke="#9a9a9a" fill="none" />
        <rect x="1577" y="13" width="12" height="16" rx="4" fill="#262626" />
        <path d="M1583 18l-3 3.500 3 3.500" stroke="#9a9a9a" fill="none" />
      </svg>
    </div>
  );
}

/* ---------- outliner ---------- */
const OUT = [
  ["Cube.041", "w-[70px]", 1], ["Cube.042", "w-[70px]", 1], ["Cube.043", "w-[70px]", 1], ["Cube.044", "w-[70px]", 1],
  ["Cube.069", "w-[70px]", 1], ["Cube.087", "w-[70px]", 1], ["Cube.088", "w-[70px]", 1], ["Cube.089", "w-[70px]", 1],
  ["Cube.092", "w-[70px]", 1], ["Empty", "w-[53px]", 0], ["Plane.000", "w-[72px]", 0], ["Plane.001", "w-[72px]", 0],
  ["Plane.002", "w-[72px]", 1], ["Wall2fl", "w-[56px]", 1], ["Wall2fl.001", "w-[80px]", 1],
];
const Picture = ({ c, fill }) => (
  <Ic s={18} c={c} className="opacity-60">
    {fill ? <rect x="2.500" y="2.500" width="13" height="13" fill={c} stroke="none" /> : <rect x="2.500" y="2.500" width="13" height="13" />}
    <path d="M4 14.500L8 6.500l3.500 8z" fill={fill ? "#2d2d2d" : c} stroke="none" />
    <circle cx="12.500" cy="5.500" r="1.300" fill={fill ? "#2d2d2d" : c} stroke="none" />
  </Ic>
);

function Outliner() {
  return (
    <div className="w-[331px] h-[310px] rounded-[6px] overflow-hidden bg-[#2a2a2a] flex flex-col">
      <div className="h-[25px] bg-[#383838] flex items-center pb-[1px] shrink-0 pr-[8px]">
        <Gap className="w-[10px]" />
        <div className={box + dark + "w-[29px] pl-[2px] gap-[1px]"}><Ic s={17}><path d="M1.500 3h5M3.500 3v12.500h5M3.500 9h5" /><path d="M9.500 9h7M9.500 15h7" strokeWidth="3" /></Ic><Chev /></div>
        <Gap className="w-[9px]" />
        <div className={box + dark + "w-[29px] pl-[2px] gap-[2px]"}><Images s={16} /><Chev /></div>
        <Gap className="w-[24px]" />
        <div className={box + "w-[109px] pl-[3px] bg-[#1d1d1d] shadow-[0_0_0_1px_#3f3f3f]"}><Ic s={17}><circle cx="10.500" cy="7" r="4.800" /><path d="M7 10.500l-5 5.500" strokeWidth="1.800" /></Ic></div>
        <div className="ml-auto flex items-center gap-[8px]">
          <div className={box + dark + "w-[29px] pl-[2px] gap-[1px]"}><Ic s={17}><path d="M2 3h14l-5.200 6.500V16L7.500 13V9.500z" /></Ic><Chev c="#8a8a8a" /></div>
          <div className="w-[18px] h-[18px] rounded-[3px] bg-[#545454] flex items-center justify-center"><Ic s={17} c="#cccccc"><path d="M2 4.500h8M2 4.500v3h10M3.500 7.500v8.500h10V11M6.500 10.500h4" /><circle cx="13.500" cy="5" r="3.800" /><path d="M13.500 3v4M11.500 5h4" /></Ic></div>
        </div>
      </div>
      <div className="flex-1 overflow-hidden">
        <div className="-mt-[3px]">
          {OUT.map(([t, w, v], i) => (
            <div key={t} className={"h-[20px] flex items-center pb-px " + (i % 2 ? "bg-[#2d2d2d]" : "bg-[#282828]")}>
              <div className="ml-[48px] h-[20px] w-[14px] border-l border-[#6f6f6f] flex items-center">
                <svg width="14" height="8" viewBox="0 0 14 8" className="-ml-[2px]"><path d="M0 .8L5.500 4 0 7.200z" fill={v ? "#d0d0d0" : "#7a7a7a"} /><path d="M4 4h10" stroke="#6f6f6f" /></svg>
              </div>
              <div className={"w-[20px] h-[18px] -ml-[2px] flex items-center justify-center rounded-[4px] " + (t === "Plane.001" ? "bg-[#585858]" : "")}>
                {t === "Empty" ? <Picture c="#d28d55" fill /> : <MeshObj o={v ? 1 : 0.5} />}
              </div>
              <span className={"ml-[4px] shrink-0 tracking-[0.12px] " + w + (v ? " text-[#c3c3c3]" : " text-[#7c7c7c]")}>{t}</span>
              {t === "Empty" ? <Picture c="#c55c69" /> : <MeshIc s={18} o={v ? 1 : 0.6} />}
              <div className="ml-auto mr-[9px]">{v ? <Eye /> : <EyeShut />}</div>
            </div>
          ))}
        </div>
      </div>
    </div>
  );
}

/* ---------- properties ---------- */
const PTAB = (children, active, cls = "") => (
  <div className={"ml-[2px] w-[26px] h-[27px] rounded-l-[4px] flex items-center justify-center " + (active ? "bg-[#424242] " : "bg-[#2b2b2b] ") + cls}>{children}</div>
);

function PropTabs() {
  const g = "#cfcfcf", b = "#7199d0", r = "#cf6571";
  return (
    <div className="w-[28px] bg-[#202020] pt-[8px] flex flex-col gap-px shrink-0">
      {PTAB(<Ic s={16} c={g}><path d="M5 2v8" /><path d="M5 10.500v5" strokeWidth="3.600" strokeLinecap="round" /><path d="M13 6.500V16" strokeWidth="2.800" /><path d="M10.300 1.500v3.500l2.700 2 2.700-2V1.500" strokeWidth="2" /></Ic>)}
      {PTAB(<Ic s={16} c={g}><path d="M2 5h11v11H2zM5 5V2.500h6V5M13 7h3v9h-3" strokeWidth="1.600" /><path d="M4.500 8.500h6M4.500 11h6M4.500 13.500h6M14 10h2M14 13h2" /></Ic>, false, "mt-[8px]")}
      {PTAB(<Ic s={16} c={g}><path d="M1 2h16v6H1z" fill={g} stroke="none" /><rect x="4.500" y="7" width="9" height="9" fill="#9a9a9a" stroke="#2b2b2b" /><path d="M6 14.500l2.500-4.500 2.500 4.500z" fill="#2b2b2b" stroke="none" /></Ic>)}
      {PTAB(<Images s={17} c={g} />)}
      {PTAB(<SceneIc s={17} c={g} />)}
      {PTAB(<Ic s={17} c={r}><circle cx="9" cy="9" r="6.800" /><path d="M3 5q4-3 6-2.500L11 5 8 9H4zM9 10l4-1 1.500 3-3.500 3.500z" fill={r} stroke="none" /><path d="M12 5l4.500-3.500" /></Ic>)}
      {PTAB(<ObjSq c="#dd9650" s={17} />, false, "mt-[8px]")}
      {PTAB(<Ic s={17} c={b}><path d="M3.500 14.500L10 8" strokeWidth="4" strokeLinecap="round" /><path d="M9 8.500Q7.500 3 13.500 2L11.500 5l1.500 2 3.300-1.500Q16 11 10 10.500" fill={b} stroke="none" /></Ic>)}
      {PTAB(<Ic s={17} c={b}><circle cx="4" cy="4" r="2.800" fill={b} stroke="none" /><circle cx="15" cy="3.500" r="1.600" fill={b} stroke="none" /><circle cx="3.500" cy="15" r="1.600" fill={b} stroke="none" /><circle cx="14.500" cy="15" r="1.600" fill={b} stroke="none" /><path d="M6 4h8M3.700 6v8M5.500 5.500l8.500 9" /></Ic>)}
      {PTAB(<Ic s={17} c={b}><path d="M12.500 3.500A6.700 6.700 0 1 0 15.500 10" /><circle cx="9" cy="9.500" r="2.800" fill={b} stroke="none" /><circle cx="15" cy="3.500" r="1.800" fill={b} stroke="none" /></Ic>)}
      {PTAB(<Ic s={17} c={b}><circle cx="7" cy="11" r="5.200" /><circle cx="7" cy="11" r="2" strokeWidth="1.800" /><path d="M3.500 7.200L14 1.500q2.500.5 2 3L11 14.500" /></Ic>)}
      {PTAB(<MeshIc s={18} c="#21d49b" />, true)}
      {PTAB(<Ic s={17} c={r}><circle cx="9" cy="9" r="7" /><path d="M9 2a7 7 0 0 0-7 7h7zM9 16a7 7 0 0 0 7-7H9z" fill={r} /></Ic>)}
      {PTAB(
        <Ic s={16} c={r}>
          <rect x="1.500" y="1.500" width="15" height="15" />
          {[0, 1, 2, 3, 4].map((y) => [0, 1, 2, 3, 4].map((x) => (x + y) % 2 === 0 && <rect key={x + "-" + y} x={1.5 + x * 3} y={1.5 + y * 3} width="3" height="3" fill={r} stroke="none" />))}
        </Ic>, false, "mt-[8px]")}
    </div>
  );
}

function Section({ t, open }) {
  return (
    <>
      <div className="h-[24px] flex items-center pt-[2px] pl-[9px] pr-[7px] text-[12px] text-[#dcdcdc]">
        <div className="pb-px">{open ? <TriD c="#a8a8a8" /> : <TriR />}</div><span className="ml-[6px] tracking-[0.15px] [text-shadow:0_1px_1px_#222]">{t}</span><div className="ml-auto"><Grip /></div>
      </div>
      {open && (
        <div className="h-[96px] bg-[#383838] flex pt-[8px] pl-[9px]">
          <div className="w-[259px] h-[79px] rounded-[4px] bg-[#2b2b2b] border border-[#404040] flex items-end pl-[10px] pb-[5px]">
            <TriR c="#b5b5b5" /><div className="ml-[115px] pb-[1px]"><Grip c="#c5c5c5" /></div>
          </div>
          <div className="ml-[9px] w-[18px] flex flex-col">
            <div className="h-[18px] bg-[#585858] rounded-t-[3px] flex items-center justify-center"><Ic s={10} c="#eee" vb="0 0 10 10"><path d="M5 .5v9M.5 5h9" /></Ic></div>
            <div className="mt-px h-[19px] bg-[#484848] rounded-b-[3px] flex items-center justify-center"><Ic s={10} c="#8a8a8a" vb="0 0 10 10"><path d="M.5 5h9" /></Ic></div>
            <div className="mt-[8px] h-[18px] bg-[#2a2a2a] rounded-[3px] shadow-[0_0_0_1px_#404040] flex items-center justify-center"><Chev c="#dcdcdc" /></div>
          </div>
        </div>
      )}
    </>
  );
}

function Properties() {
  return (
    <div className="w-[331px] h-[654px] rounded-[6px] overflow-hidden bg-[#424242] flex flex-col">
      <div className="h-[25px] bg-[#383838] flex items-center text-[#e4e4e4] shrink-0 pr-[10px] tracking-[0.15px]">
        <Gap className="w-[10px]" />
        <div className={box + dark + "w-[29px] pl-[2px] gap-[2px]"}>
          <Ic s={16}><rect x="1" y="1.500" width="16" height="6.500" rx="3" fill="#e4e4e4" stroke="none" /><rect x="1" y="10" width="16" height="6.500" rx="3" fill="#e4e4e4" stroke="none" /><path d="M10 3h4.500v3.500H10zM4 11.500h7V15H4z" fill="#3a3a3a" stroke="none" /></Ic><Chev />
        </div>
        <Gap className="w-[14px]" />
        <ObjSq /><span className="ml-[8px] w-[81px]">Plane.001</span>
        <MeshIc s={18} c="#e4e4e4" /><span className="ml-[8px]">Plane.001</span>
        <Ic s={15} c="#9c9c9c" className="ml-auto"><path d="M11 1.500l5.500 5.500-2 .5-3 3.500q.5 3-1 4l-7.500-7.500q1.500-1.500 4-1l3.500-3zM6.500 11.500L1.500 16.500" /></Ic>
      </div>
      <div className="flex flex-1">
        <PropTabs />
        <div className="flex-1 pt-[9px] bg-[#424242]">
          <div className="ml-[9px] w-[286px] h-[18px] flex rounded-[3px] overflow-hidden text-[#e4e4e4] tracking-[0.15px]">
            <div className="w-[31px] bg-[#2a2a2a] flex items-center pl-[2px] gap-[2px]"><MeshIc s={17} c="#dcdcdc" /><Chev /></div>
            <div className="w-[235px] bg-[#1d1d1d] border-l border-[#3a3a3a] flex items-center pl-[7px]">Plane.001</div>
            <div className="w-[20px] bg-[#595959] flex items-center justify-center"><Ic s={16} c="#a5a5a5"><path d="M9 1.800l6.500 2v5q-.5 5-6.500 7.800Q3 13.800 2.500 8.800v-5z" /></Ic></div>
          </div>
          <div className="h-[9px]" />
          <Section t="Vertex Groups" open />
          <Section t="Shape Keys" open />
          {["UV Maps", "Vertex Colors", "Face Maps", "Normals", "Texture Space", "Geometry Data", "Custom Properties"].map((t) => <Section key={t} t={t} />)}
        </div>
      </div>
    </div>
  );
}

/* ---------- status bar ---------- */
const Mouse = ({ k }) => (
  <svg width="20" height="16" viewBox="0 0 20 16" fill="none" stroke="#a8a8a8" className="shrink-0">
    <rect x="2" y="1" width="10" height="14" rx="3.500" />
    {k === "l" && <path d="M2 7V4q0-3 5-3v6z" fill="#d0d0d0" stroke="none" />}
    {k === "r" && <path d="M12 7V4q0-3-5-3v6z" fill="#d0d0d0" stroke="none" />}
    {k === "m" && <rect x="5.500" y="3" width="3" height="5" fill="#d0d0d0" stroke="none" />}
    {k === "d" && <><path d="M2 7V4q0-3 5-3v6z" fill="#d0d0d0" stroke="none" /><path d="M14 1.500v7M17 3v5" /></>}
  </svg>
);
function StatusBar() {
  return (
    <div className="h-[20px] bg-[#303030] flex items-center text-[#a6a6a6] [text-shadow:0_1px_1px_#1a1a1a]">
      <Gap className="w-[10px]" /><Mouse k="l" /><span className="ml-[4px] w-[40px]">Select</span>
      <Mouse k="d" /><span className="ml-[6px] w-[147px]">Box Select</span>
      <Mouse k="m" /><span className="ml-[3px] w-[212px]">Rotate View</span>
      <Mouse k="r" /><span className="ml-[4px]">Object Context Menu</span>
      <span className="ml-auto mr-[30px] tracking-[0.16px]">Collection | Plane.001 | Verts:886 | Faces:696 | Tris:1,404 | Objects:0/50 | Mem: 50.0 MB | v2.80.75</span>
    </div>
  );
}

/* ---------- taskbar ---------- */
const TaskApp = ({ w, on, hi, children }) => (
  <div className={w + " h-[40px] shrink-0 flex items-center justify-center relative " + (hi ? "bg-[#eef3f1]" : "")}>
    {children}
    {on && <div className={"absolute bottom-0 h-[2px] bg-[#0f76d0] " + (hi ? "inset-x-0" : "inset-x-[4px]")} />}
  </div>
);
function Taskbar() {
  return (
    <div className="h-[40px] flex items-center bg-gradient-to-r from-[#d2dedb] via-[#cfdeda] to-[#d3dcda] font-['Noto_Sans']">
      <div className="w-[48px] flex justify-center">
        <svg width="16" height="16" viewBox="0 0 16 16"><path d="M0 2.300l6.800-1v6.300H0zM7.600 1.200L16 0v7.600H7.600zM0 8.400h6.800v6.300L0 13.700zM7.600 8.400H16V16l-8.400-1.200z" fill="#000" /></svg>
      </div>
      <div className="w-[343px] h-[39px] bg-white border border-[#c4c9c8] flex items-center">
        <svg width="18" height="18" viewBox="0 0 18 18" fill="none" stroke="#111" strokeWidth="1.300" className="ml-[11px]"><circle cx="11" cy="6.500" r="5" /><path d="M7.300 10.200L1.500 16.500" /></svg>
        <span className="ml-[10px] text-[14.5px] tracking-[-0.2px] text-[#3c3c3c] whitespace-nowrap">Введите здесь текст для поиска</span>
      </div>
      <TaskApp w="w-[50px]"><svg width="17" height="18" viewBox="0 0 17 18" fill="none" stroke="#111" strokeWidth="1.200"><rect x="1" y="5" width="9.500" height="8" /><path d="M1 3V1.200h9.500V3M1 15v1.800h9.500V15M15 1v16" /><rect x="13.600" y="5.500" width="3" height="3" fill="#111" stroke="none" /></svg></TaskApp>
      <Gap className="w-[2px]" />
      <TaskApp w="w-[48px]" on><svg width="22" height="22" viewBox="0 0 22 22"><path d="M1 3q0-2 2-2h6l2 2h9q1 0 1 1v14H1z" fill="#f8c74e" /><path d="M1 2h8v3H1z" fill="#d99a20" /><path d="M1 6h20v13H1z" fill="#fcd567" /><path d="M4 21v-8q0-2 2-2h10q2 0 2 2v8h-4v-5q0-1-1-1H9q-1 0-1 1v5z" fill="#3f8fd0" /></svg></TaskApp>
      <TaskApp w="w-[49px]"><svg width="22" height="24" viewBox="0 0 22 24"><path d="M0 7h22v16H0z" fill="#0a0a0a" /><path d="M7 7V4q0-3 4-3t4 3v3" fill="none" stroke="#0a0a0a" strokeWidth="1.500" /><path d="M6 10h4.500v4.500H6z" fill="#f25022" /><path d="M11.500 10H16v4.500h-4.500z" fill="#7fba00" /><path d="M6 15.500h4.500V20H6z" fill="#00a4ef" /><path d="M11.500 15.500H16V20h-4.500z" fill="#ffb900" /></svg></TaskApp>
      <TaskApp w="w-[49px]"><svg width="24" height="24" viewBox="0 0 24 24"><path d="M0 8.500L12 1l12 7.500V23H0z" fill="#0f6cbd" /><path d="M3 7h18v6l-9 7-9-7z" fill="#e8f3fb" /><path d="M0 9l12 7L24 9v14H0z" fill="#28a8ea" /><path d="M0 23l14-8 10 8z" fill="#1490df" /></svg></TaskApp>
      <TaskApp w="w-[51px]"><svg width="24" height="24" viewBox="0 0 24 24"><path d="M8 2l13 5v11L9 13z" fill="#4fb3f0" stroke="#3079b8" /><path d="M1 17l8-3 7 4-9 5z" fill="#c7d3dc" stroke="#8a99a5" strokeWidth="0.600" /><path d="M3 17.500l8 3M6 16.500l7 3" stroke="#7a8994" strokeWidth="0.600" /></svg></TaskApp>
      <TaskApp w="w-[44px]"><svg width="24" height="24" viewBox="0 0 24 24"><defs><linearGradient id="ff" x1="0.800" y1="0" x2="0.300" y2="1"><stop offset="0" stopColor="#ffe226" /><stop offset="0.500" stopColor="#ff7139" /><stop offset="1" stopColor="#e31587" /></linearGradient></defs><path d="M15 0q1 3 4 5t4 8a11 11 0 0 1-22 1Q1 8 3 4l1 3q2-3 5-3-1 2 1 3h2q4-2 3-7z" fill="url(#ff)" /><circle cx="12" cy="13" r="5" fill="#7a3fd0" /><path d="M7 10q3-2 6 0l3 1q0 3-3 3t-4 2q-3-2-2-6z" fill="#ff8a1f" /></svg></TaskApp>
      <TaskApp w="w-[53px]"><svg width="24" height="26" viewBox="0 0 24 24"><path d="M17 0l7 3v18l-7 3z" fill="#b583f0" /><path d="M17 0v24L6 14.500 2 18l-2-1V7l2-1 4 3.500zM17 7l-6.500 5 6.500 5zM2.500 9.500v5L5 12z" fillRule="evenodd" fill="#7c43bd" /></svg></TaskApp>
      <TaskApp w="w-[48px]" on><svg width="24" height="24" viewBox="0 0 24 24"><circle cx="12" cy="12" r="11" fill="#fbc116" /><path d="M12 12L2.500 6.500A11 11 0 0 1 21.500 6.500H12z" fill="#d9412f" /><path d="M12 12L2.500 6.500A11 11 0 0 0 11 23l5.500-9z" fill="#2f9e4f" /><circle cx="12" cy="12" r="5.600" fill="#fff" /><circle cx="12" cy="12" r="4.400" fill="#4285f4" /></svg></TaskApp>
      <Gap className="w-[1px]" />
      <TaskApp w="w-[48px]" on hi><BlenderMark s={27} c="#e8872a" dot="#265787" hole="#fff" /></TaskApp>
      <Gap className="w-[1px]" />
      <TaskApp w="w-[48px]" on><svg width="22" height="24" viewBox="0 0 22 24"><path d="M0 12L13 2l8-1.500V23.500L13 22z" fill="#141414" /><path d="M4.500 11L12 5.500V10l-2.500 1.500zM4.500 13l7.500 5.500V14l-2.500-1.500zM14.500 10V5l5-1v13zM14 13l5 6-5-.5z" fill="#f0f0f0" /></svg></TaskApp>
      <TaskApp w="w-[50px]"><svg width="24" height="26" viewBox="0 0 24 26"><path d="M12 16l5-1 1 6h-6z" fill="#b9c0c6" /><ellipse cx="14.500" cy="22" rx="6" ry="2.600" fill="#e3e7ea" stroke="#b0b7bc" strokeWidth="0.500" /><path d="M4 1l18.500 2-1 16L5 17z" fill="#1f3fc4" stroke="#dfe6f0" /><path d="M9 3l11 12V4z" fill="#7aa5f0" opacity="0.700" /><path d="M1 7h15v6H1z" fill="#2c9be8" /><path d="M2 8.500h13M2 11h13" stroke="#bfe2fa" strokeDasharray="1.500 1" /></svg></TaskApp>
      <div className="ml-auto flex items-center pr-[4px] text-[12px] text-[#111] tracking-[-0.4px] leading-[20px]">
        <svg width="110" height="20" viewBox="0 0 110 20" fill="none" stroke="#111" strokeWidth="1.200">
          <path d="M3 13l6-6 6 6" />
          <path d="M25.500 3.500l14-1.500v15h-14z" /><path d="M30 9q2-3 5-1M35.500 6v3h-3M34 11q-2 2-4 .5M29.500 14v-3h3" strokeWidth="1" /><circle cx="38" cy="15" r="3.500" fill="#d8202c" stroke="none" />
          <path d="M53 6.500h11v7H53z" /><path d="M55 8h8v4.500h-8z" fill="#111" /><path d="M65 8.500v3M50 4v4M53 4v4M49 7h5v2.500h-5z" strokeWidth="1" />
          <path d="M74 8h2.500l3.500-3.500v11L76.500 12H74z" /><path d="M82.500 7.500q1.500 2.500 0 5M85 5.500q3 4.500 0 9M87.500 3.500q4.500 6.500 0 13" strokeWidth="1.100" />
          <path d="M99 16a12 12 0 0 1 11-12M102 16.500a9 9 0 0 1 8-8.500M105 17a6 6 0 0 1 5-5" /><circle cx="108.500" cy="15.800" r="1.500" fill="#111" stroke="none" />
        </svg>
        <div className="w-[42px] ml-[4px] mt-px text-center text-[13px]">ENG<br />INTL</div>
        <div className="w-[60px] mt-px text-center">13:30<br />15.05.2020</div>
        <svg width="18" height="20" viewBox="0 0 18 20" fill="none" stroke="#111" strokeWidth="1.200" className="ml-[14px]"><path d="M1.500 2.500h15v12h-4.500l-3 3-3-3H1.500z" /></svg>
        <div className="w-px h-[38px] bg-[#a8b3b0] ml-[19px]" />
      </div>
    </div>
  );
}

export default function App() {
  return (
    <div className="w-[1920px] h-[1080px] overflow-hidden bg-[#202020] font-['DejaVu_Sans'] text-[11px] [font-stretch:condensed] leading-none whitespace-nowrap">
      <TitleBar />
      <TopBar />
      <div className="flex h-[969px] pl-px">
        <div className="w-[1584px] flex flex-col gap-[3px] -ml-px">
          <Viewport />
          <Timeline />
        </div>
        <div className="ml-[4px] flex flex-col gap-[3px]">
          <Outliner />
          <Properties />
        </div>
      </div>
      <StatusBar />
      <Taskbar />
    </div>
  );
}
